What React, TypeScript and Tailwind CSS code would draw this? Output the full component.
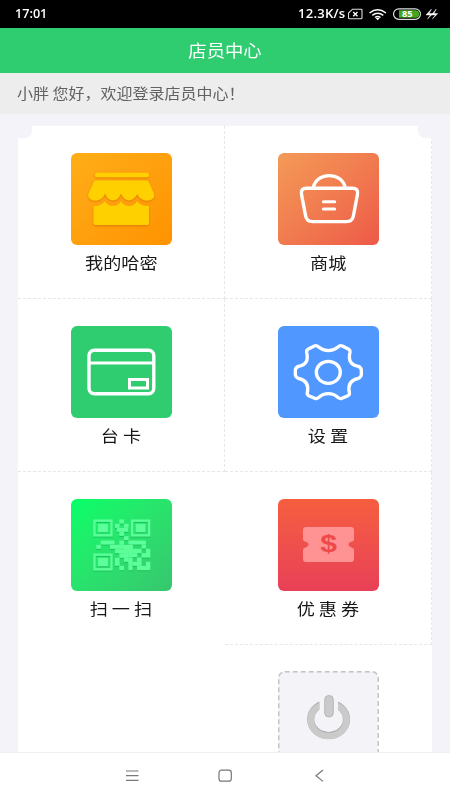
import type { ReactNode } from 'react';

const cjk = "font-['Noto_Sans_CJK_SC',sans-serif]";

function StatusBar() {
  return (
    <div className="flex h-7 items-center bg-black pl-[15px] pr-[12px] font-['Open_Sans',sans-serif] text-white">
      <span className="w-[34px] origin-left scale-x-[1.01] whitespace-nowrap text-[12.500px] font-semibold leading-7">17:01</span>
      <span className="ml-auto mr-[2.500px] origin-right scale-x-[1.09] whitespace-nowrap text-[12px] font-semibold leading-7 tracking-[0.200px]">12.3K/s</span>
      <svg width="90" height="16" viewBox="0 0 90 16" fill="none">
        <path d="M4.500 3.200H13a1 1 0 0 1 1 1v7.600a1 1 0 0 1-1 1H1.500a1 1 0 0 1-1-1V7Z" stroke="#ddd" strokeWidth="1.100" />
        <path d="M5.200 6l4.300 4.200M9.500 6L5.200 10.200" stroke="#fff" strokeWidth="1.300" />
        <path d="M21.500 7q8-6.300 16.500 0M24.300 9.300q5.300-4 11 0M27 11.500q2.700-1.900 5.500 0" stroke="#fff" strokeWidth="1.500" />
        <path d="M27.700 12.300q2-1.300 4 0l-2 2Z" fill="#fff" />
        <rect x="45.500" y="2.800" width="27" height="10.500" rx="5.250" stroke="#ddd" strokeWidth="1.200" />
        <path d="M51 4.300h16.500a3.700 3.700 0 0 1 0 7.500H51Z" fill="#46a51c" />
        <text transform="translate(59.200 11) scale(1.150 1)" textAnchor="middle" fill="#fff" fontFamily="Open Sans, sans-serif" fontWeight="700" fontSize="8">85</text>
        <path d="M83.500 3L78 9h4.300l-2.800 4 5.500-5.400h-3.800ZM88.300 3l-5 6h4l-3 4 5.500-5.400H86Z" fill="#fff" stroke="#fff" strokeWidth=".4" />
      </svg>
    </div>
  );
}

function Tile({ bg, children }: { bg: string; children: ReactNode }) {
  return (
    <div className={'h-[92px] w-[101px] overflow-hidden rounded-[6px] ' + bg}>
      <svg width="101" height="92" viewBox="0 0 101 92" fill="none">{children}</svg>
    </div>
  );
}

function Cell({ label, edge, children }: { label: string; edge: string; children: ReactNode }) {
  return (
    <div className={'flex h-[173px] flex-col items-center border-dashed border-[#e7e7e7] pt-[26.500px] ' + edge}>
      {children}
      <span className={'mt-[5.500px] scale-x-[1.12] whitespace-pre text-[16.200px] leading-6 text-[#171717] ' + cjk}>{label}</span>
    </div>
  );
}

function Shop() {
  return (
    <>
      <defs>
        <filter id="shop-shadow" x="-20%" y="-20%" width="140%" height="150%">
          <feDropShadow dx="0" dy="1" stdDeviation="1.300" floodColor="#d86800" floodOpacity=".7" />
        </filter>
      </defs>
      <g fill="#ffd000" filter="url(#shop-shadow)">
        <path d="M22.500 53Q30 53.500 34 48.300Q37 53 42 53T50 48.300Q53 53 58 53T66 48.300Q70 53.500 78 53V70q0 2-2 2H24.500q-2 0-2-2Z" />
        <rect x="24" y="19.700" width="54" height="4.500" rx="2" />
        <path d="M25 27.500H76q1.300 0 1.800 1.500l5.200 11.500c1.300 4.500-2.500 7-6.500 7-5 0-8.500-2.500-10.200-6.500C64 44.500 61.500 47.300 58 47.300S52 44.500 50 40.500C48 44.500 46 47.300 42 47.300S36 44.500 34 40.500C32.300 45 29 47.500 24 47.500c-4 0-7.700-2.500-6.500-7l5.200-11.500Q23.300 27.500 25 27.500Z" />
      </g>
    </>
  );
}

function Basket() {
  return (
    <g stroke="#fff" strokeWidth="3.400" strokeLinecap="round" strokeLinejoin="round">
      <path d="M28.500 35.300H74.500q6.200 0 5 6l-4.200 22q-1 5.300-7 5.300H34.700q-6 0-7-5.300l-4.200-22q-1.200-6 5-6Z" />
      <path d="M35.500 34C39 18.800 63.500 18.800 67 34" />
      <path d="M45.300 48.700H56.700M45.300 56H56.700" strokeWidth="3" />
    </g>
  );
}

function Card() {
  return (
    <g stroke="#fff" strokeWidth="3.400">
      <rect x="18" y="24.200" width="64.800" height="43.600" rx="5.500" />
      <path d="M18 37H83" strokeWidth="3" />
      <rect x="58.500" y="53.500" width="18" height="8.500" strokeWidth="3" />
    </g>
  );
}

function Gear() {
  return (
    <g transform="scale(.3333) translate(-39 -32)" stroke="#fff" strokeWidth="10" strokeLinejoin="round">
      <path d="M130 101L148 92Q155 89 161 95Q174 106 190 106T219 95Q225 89 232 92L250 101Q256 104 255 111Q246 147 280 153Q288 156 289 164V178Q288 186 280 189Q246 196 253 231Q255 238 249 241L231 249Q225 252 218 246Q206 235 190 235T162 246Q155 252 149 249L131 241Q125 238 127 231Q134 196 100 189Q92 186 91 178V164Q92 156 100 153Q134 147 125 111Q124 104 130 101Z" />
      <ellipse cx="190" cy="171" rx="36" ry="33" />
    </g>
  );
}

const modules = [
  [78, 0, 14, 12], [65, 13, 14, 12], [92, 13, 14, 12], [71, 25, 34, 12], [78, 37, 14, 12], [92, 50, 14, 12],
  [22, 63, 42, 12], [9, 76, 14, 12], [50, 76, 42, 12], [78, 63, 14, 13], [105, 63, 14, 12],
  [92, 76, 27, 26], [65, 89, 28, 12], [118, 63, 40, 12], [145, 75, 13, 12], [118, 88, 14, 13],
  [65, 115, 14, 24], [78, 101, 28, 14], [105, 101, 14, 12], [92, 115, 14, 12], [78, 139, 14, 13],
  [118, 101, 14, 12], [131, 88, 14, 13], [158, 88, 13, 26], [105, 114, 13, 25], [118, 127, 27, 12],
  [131, 114, 14, 13], [145, 101, 14, 13], [158, 127, 13, 25], [105, 139, 13, 13], [131, 139, 27, 13],
];

function Qr() {
  return (
    <>
      <defs>
        <filter id="qr-shadow"><feDropShadow dx="0" dy="3" stdDeviation="2" floodColor="#008b43" floodOpacity=".4" /></filter>
      </defs>
      <g transform="translate(22.300 20.500) scale(.3333)" fill="#5cff9a" filter="url(#qr-shadow)">
        {[[0, 0], [113, 0], [0, 102]].map(([x, y]) => (
          <g key={x + ',' + y}>
            <rect x={x + 3.5} y={y + 3.5} width="51" height="44" stroke="#5cff9a" strokeWidth="7" fill="none" />
            <rect x={x + 14} y={y + 13} width="30" height="25" />
          </g>
        ))}
        {modules.map(([x, y, w, h], i) => <rect key={i} x={x} y={y} width={w} height={h} />)}
      </g>
    </>
  );
}

function Coupon() {
  return (
    <>
      <path d="M28 28H73q3 0 3 3V40.500Q76 42 74 42.500Q70.500 43.500 70.500 45.500T74 48.700Q76 49.200 76 51V60q0 3-3 3H28q-3 0-3-3V51Q25 49.200 27 48.700Q30.500 47.600 30.500 45.500T27 42.500Q25 42 25 40.500V31q0-3 3-3Z" fill="#ff9292" />
      <text transform="translate(50.500 53) scale(1.250 1)" textAnchor="middle" fontFamily="Liberation Sans, sans-serif" fontSize="24" fontWeight="700" fill="#ee4a4c">$</text>
    </>
  );
}

export default function App() {
  return (
    <div className="flex h-[800px] w-[450px] flex-col overflow-hidden bg-[#f3f3f9]">
      <StatusBar />
      <header className={'flex h-[45px] items-center justify-center bg-[#2fcc70] pb-px text-[16.500px] text-white ' + cjk}>
        <span className="scale-x-[1.11] leading-6">店员中心</span>
      </header>
      <div className={'flex h-[41px] items-center bg-[#ededed] pb-px pl-[17px] text-[14.500px] text-[#626262] ' + cjk}>
        <span className="origin-left scale-x-[1.103] whitespace-nowrap leading-6">小胖 您好，欢迎登录店员中心！</span>
      </div>
      <main className="relative mx-[18px] mt-3 h-[626px] overflow-hidden bg-white">
        <div className="grid grid-cols-2">
          <Cell label="我的哈密" edge="border-b border-r">
            <Tile bg="bg-linear-to-br from-[#ffae18] to-[#ff9200]"><Shop /></Tile>
          </Cell>
          <Cell label="商城" edge="border-b border-r">
            <Tile bg="bg-linear-to-br from-[#f39a57] to-[#ed5948]"><Basket /></Tile>
          </Cell>
          <Cell label="台 卡" edge="border-b border-r">
            <Tile bg="bg-[#2fcc70]"><Card /></Tile>
          </Cell>
          <Cell label="设 置" edge="border-b border-r">
            <Tile bg="bg-[#5098ff]"><Gear /></Tile>
          </Cell>
          <Cell label="扫 一 扫" edge="border-r border-r-transparent">
            <Tile bg="bg-linear-to-br from-[#00ff68] to-[#36c66e]"><Qr /></Tile>
          </Cell>
          <Cell label="优 惠 券" edge="border-b border-r">
            <Tile bg="bg-linear-to-b from-[#f65e3e] to-[#e84057]"><Coupon /></Tile>
          </Cell>
          <div className="col-start-2 flex justify-center pt-[26px]">
            <svg width="101" height="94" viewBox="0 0 101 94" fill="none">
              <defs>
                <clipPath id="power-gap"><path d="M20 20H41.300V46H60V20H80V80H20Z" /></clipPath>
              </defs>
              <rect x=".75" y=".75" width="99.500" height="110" rx="6" fill="#f3f3f8" stroke="#c4c4c4" strokeWidth="1.500" strokeDasharray="5 3" />
              <g clipPath="url(#power-gap)">
                <ellipse cx="50.600" cy="48.300" rx="17.900" ry="16.200" stroke="#adadad" strokeWidth="7.200" />
                <ellipse cx="50.600" cy="48.800" rx="17.900" ry="16.200" stroke="#cacaca" strokeWidth="6.400" />
              </g>
              <rect x="46.700" y="24.500" width="8.600" height="21.500" rx="4" fill="#cacaca" stroke="#adadad" strokeWidth=".8" />
            </svg>
          </div>
        </div>
        <div className="absolute left-0 top-0 h-3 w-[14px] rounded-br-[7px] bg-[#f3f3f9]" />
        <div className="absolute right-0 top-0 h-3 w-[14px] rounded-bl-[7px] bg-[#f3f3f9]" />
      </main>
      <nav className="flex h-12 items-center justify-center border-t border-[#f0f0f3] bg-white pb-px">
        <svg width="210" height="20" viewBox="0 0 210 20" fill="none" stroke="#777" strokeWidth="1.200">
          <path d="M6 5h12.500M6 9.700h12.500M6 14.400h12.500" />
          <rect x="99" y="4.200" width="12.300" height="11" rx="2.500" />
          <path d="M203 4l-7 5.700 7 5.700" />
        </svg>
      </nav>
    </div>
  );
}
